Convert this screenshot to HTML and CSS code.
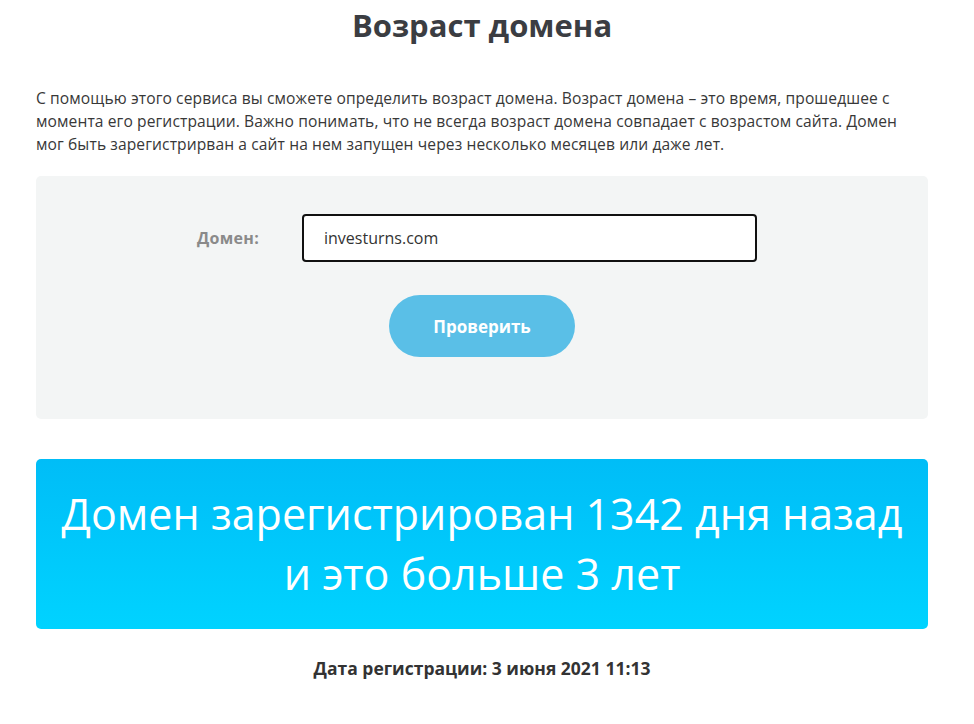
FILE: index.html
```html
<!DOCTYPE html>
<html lang="ru">
<head>
<meta charset="utf-8">
<title>Возраст домена</title>
<link rel="stylesheet" href="styles.css">
</head>
<body>
<main class="page">
  <h1 class="title">Возраст домена</h1>
  <p class="intro">С помощью этого сервиса вы сможете определить возраст домена. Возраст домена – это время, прошедшее с момента его регистрации. Важно понимать, что не всегда возраст домена совпадает с возрастом сайта. Домен мог быть зарегистрирван а сайт на нем запущен через несколько месяцев или даже лет.</p>
  <form class="check-box">
    <div class="field-row">
      <label class="field-label" for="domain">Домен:</label>
      <input class="field-input" id="domain" type="text" value="investurns.com">
    </div>
    <button class="check-btn" type="button">Проверить</button>
  </form>
  <div class="result">
    <p class="result-text">Домен зарегистрирован 1342 дня назад<br>и это больше 3 лет</p>
  </div>
  <p class="reg-date">Дата регистрации: 3 июня 2021 11:13</p>
</main>
</body>
</html>
```
FILE: styles.css
```css
html, body {
  margin: 0;
  padding: 0;
  background: #ffffff;
}
body {
  font-family: "Open Sans", "Liberation Sans", sans-serif;
  color: #333333;
}
.page {
  width: 892px;
  margin: 0 0 0 36px;
  display: flex;
  flex-direction: column;
}
.title {
  margin: 5px 0 0;
  text-align: center;
  font-size: 31px;
  line-height: 40px;
  font-weight: 700;
  color: #3b3d42;
}
.intro {
  margin: 42px 0 0;
  font-family: "Open Sans", "Liberation Sans", sans-serif;
  font-size: 15.6px;
  letter-spacing: 0.1px;
  line-height: 23px;
  color: #383838;
}
.check-box {
  margin-top: 20px;
  background: #f3f5f5;
  border-radius: 5px;
  height: 243px;
  box-sizing: border-box;
  padding-top: 38px;
  display: flex;
  flex-direction: column;
  align-items: center;
}
.field-row {
  display: flex;
  align-items: center;
  margin-left: 161px;
  align-self: flex-start;
}
.field-label {
  width: 105px;
  font-size: 16px;
  font-weight: 700;
  letter-spacing: 0.3px;
  color: #8a8a8a;
}
.field-input {
  width: 455px;
  height: 48px;
  box-sizing: border-box;
  border: 2px solid #111111;
  border-radius: 4px;
  padding: 0 20px;
  font-family: "Open Sans", "Liberation Sans", sans-serif;
  font-size: 16px;
  color: #333333;
  background: #ffffff;
}
.check-btn {
  margin-top: 33px;
  width: 186px;
  height: 62px;
  border: none;
  border-radius: 31px;
  background: #5abfe7;
  color: #ffffff;
  font-family: "Open Sans", "Liberation Sans", sans-serif;
  font-size: 17px;
  font-weight: 700;
}
.result {
  margin-top: 40px;
  height: 170px;
  border-radius: 5px;
  background: linear-gradient(180deg, #00bdf7 0%, #00d3ff 100%);
  display: flex;
  align-items: center;
  justify-content: center;
}
.result-text {
  margin: 0;
  text-align: center;
  color: #ffffff;
  font-size: 43px;
  line-height: 60px;
  font-weight: 400;
}
.reg-date {
  margin: 27px 0 0;
  text-align: center;
  font-size: 17.5px;
  font-weight: 700;
  color: #333333;
}
```
